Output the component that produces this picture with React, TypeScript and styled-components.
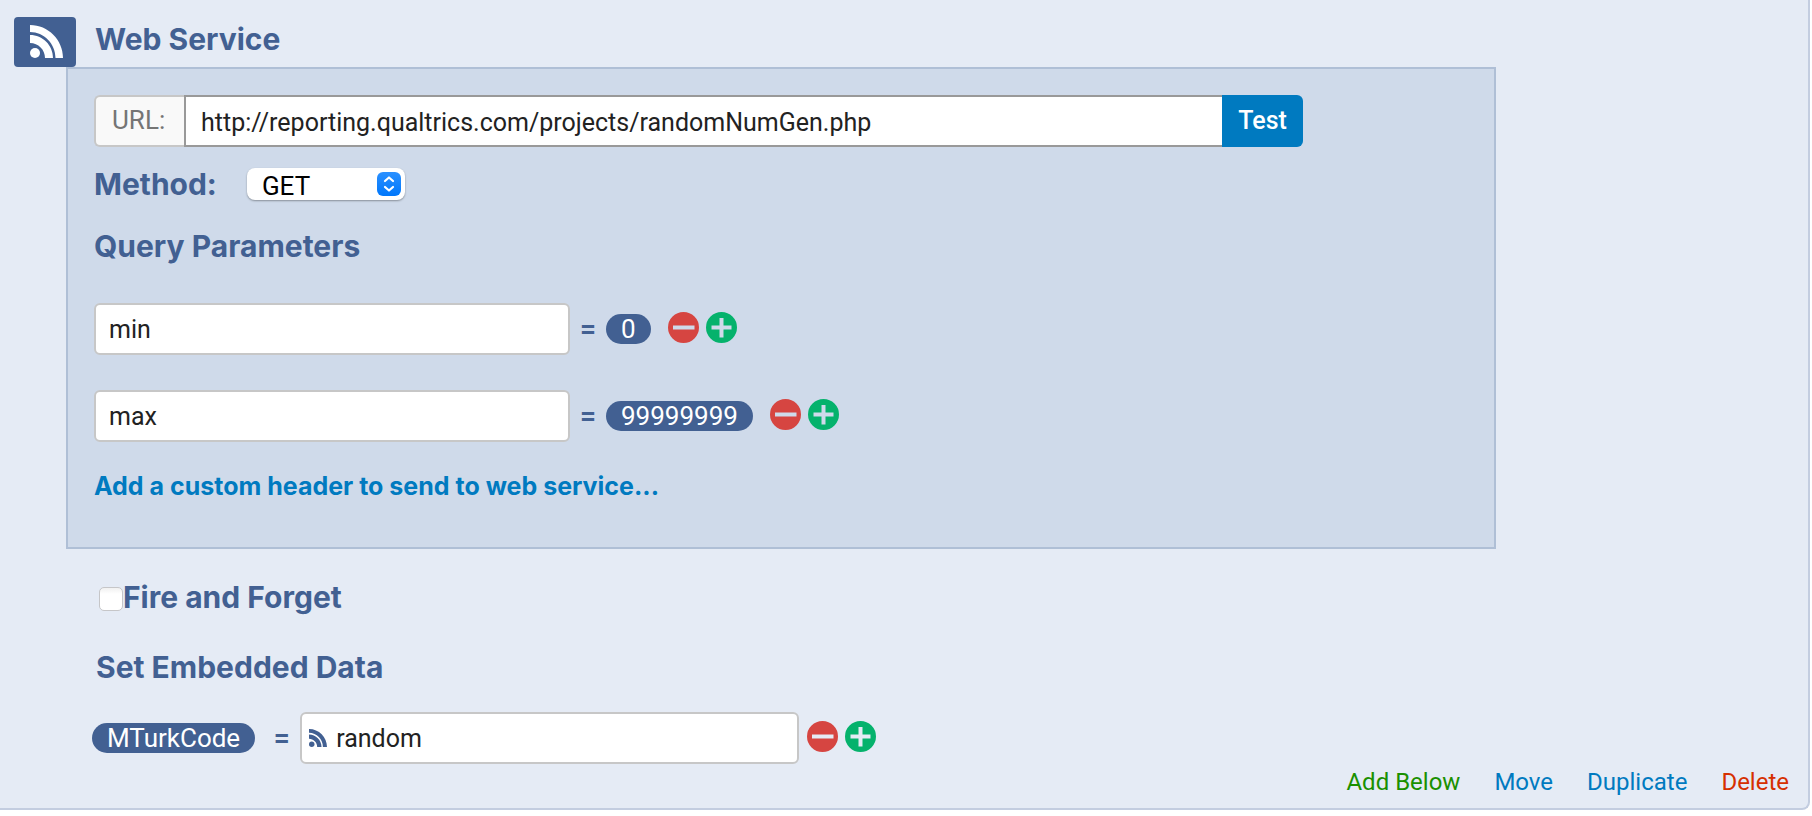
import React from 'react';
import styled, { createGlobalStyle } from 'styled-components';

const navy = '#426092';
const blue = '#007ac0';

const GlobalStyle = createGlobalStyle`
  *, *::before, *::after { box-sizing: border-box; }
  body {
    margin: 0;
    background: #fff;
    color: #222;
    font-family: Roboto, "Liberation Sans", sans-serif;
    font-size: 25px;
  }
  input, select, button { font: inherit; color: inherit; margin: 0; }
`;

const Card = styled.main`
  margin-right: 2px;
  background: #e5ebf5;
  border: solid #c3cde0;
  border-width: 0 2px 2px 0;
  border-bottom-right-radius: 8px;
  padding-top: 17px;
`;

const Header = styled.header`
  display: flex;
  align-items: center;
  gap: 19px;
  height: 50px;
  padding-left: 14px;
`;

const Badge = styled.div`
  display: flex;
  align-items: center;
  justify-content: center;
  width: 62px;
  height: 50px;
  padding-left: 2px;
  padding-bottom: 2px;
  border-radius: 4px;
  background: ${navy};
  color: #fff;
`;

const Title = styled.h2`
  margin: 0;
  font: bold 30px/40px Inter, sans-serif;
  color: ${navy};
`;

const HeaderTitle = styled(Title)`
  padding-bottom: 6px;
`;

const Panel = styled.section`
  margin: 0 312px 0 66px;
  padding: 26px 26px 45px;
  border: 2px solid #afbfd6;
  background: #cfdaea;
`;

const UrlGroup = styled.div`
  display: flex;
  height: 52px;
  max-width: 1209px;
`;

const UrlLabel = styled.label`
  flex: none;
  width: 90px;
  padding-left: 16px;
  border: 2px solid #c7c7c7;
  border-right: 0;
  border-radius: 6px 0 0 6px;
  background: #f9f9f9;
  color: #757575;
  font-size: 26px;
  line-height: 46px;
`;

const UrlInput = styled.input`
  flex: 1;
  min-width: 0;
  padding: 2px 15px 0;
  border: 2px solid #999;
  border-right: 0;
  border-radius: 0;
  background: #fff;
`;

const TestButton = styled.button`
  flex: none;
  width: 81px;
  padding: 0 0 1px;
  border: 0;
  border-radius: 0 6px 6px 0;
  background: ${blue};
  color: #fff;
  font-weight: 500;
`;

const MethodRow = styled.div`
  display: flex;
  align-items: center;
  gap: 30px;
  margin: 17px 0 22px;
`;

const MethodLabel = styled.label`
  font: bold 30px/40px Inter, sans-serif;
  color: ${navy};
`;

const SelectWrap = styled.div`
  position: relative;
  width: 158px;
  height: 32px;
`;

const Select = styled.select`
  appearance: none;
  width: 100%;
  height: 100%;
  padding: 4px 32px 0 15px;
  border: 0;
  border-radius: 8px;
  background: #fff;
  box-shadow: 0 1px 2px rgba(0, 0, 0, 0.35);
  color: #000;
  font-size: 26px;
  line-height: 28px;
`;

const Stepper = styled.svg`
  position: absolute;
  top: 4px;
  right: 4px;
  pointer-events: none;
`;

const ParamList = styled.div`
  display: flex;
  flex-direction: column;
  gap: 35px;
  margin: 37px 0 28px;
`;

const Row = styled.div`
  display: flex;
  align-items: center;
`;

const Field = styled.div<{ $width: number }>`
  display: flex;
  align-items: center;
  gap: 9px;
  flex: 0 1 ${(p) => p.$width}px;
  height: 52px;
  border: 2px solid #c7c7c7;
  border-radius: 6px;
  background: #fff;
  color: ${navy};
  overflow: hidden;
`;

const FieldInput = styled.input<{ $inset?: number }>`
  flex: 1;
  min-width: 0;
  height: 100%;
  padding: 0 0 0 ${(p) => p.$inset ?? 0}px;
  border: 0;
  background: transparent;
  color: #222;
  outline-offset: -2px;
`;

const FieldIcon = styled.span`
  display: flex;
  padding-left: 7px;
`;

const Equals = styled.span<{ $wide?: boolean }>`
  width: ${(p) => (p.$wide ? 45 : 36)}px;
  padding-left: ${(p) => (p.$wide ? 8 : 0)}px;
  text-align: center;
  font-size: 28px;
  font-weight: bold;
  line-height: 30px;
  color: ${navy};
`;

const Pill = styled.button`
  height: 30px;
  padding: 0 15px;
  border: 0;
  border-radius: 15px;
  background: ${navy};
  color: #fff;
  font-size: 26px;
  line-height: 30px;
`;

const Actions = styled.div<{ $gap: number }>`
  display: flex;
  gap: 7px;
  margin-left: ${(p) => p.$gap}px;
  padding-bottom: 3px;
`;

const RoundButton = styled.button<{ $color: string }>`
  display: flex;
  padding: 0;
  border: 0;
  border-radius: 50%;
  background: none;
  color: ${(p) => p.$color};
`;

const HeaderLink = styled.a`
  display: block;
  font: bold 25px/32px Inter, sans-serif;
  color: ${blue};
  text-decoration: none;
`;

const Below = styled.section`
  padding: 28px 0 0 92px;
`;

const CheckRow = styled.div`
  display: flex;
  align-items: center;
  padding-left: 7px;
  margin-bottom: 30px;
`;

const Checkbox = styled.input`
  appearance: none;
  width: 24px;
  height: 24px;
  margin: 4px 0 0;
  border: 1px solid #c6c6c8;
  border-radius: 5px;
  background: linear-gradient(#f1f1f1, #fff 6px);
`;

const EmbeddedTitle = styled(Title)`
  padding-left: 4px;
  margin-bottom: 25px;
`;

const Footer = styled.footer`
  display: flex;
  justify-content: flex-end;
  gap: 34px;
  padding: 2px 19px 10px;
`;

const FooterLink = styled.a<{ $color: string }>`
  color: ${(p) => p.$color};
  font-size: 24px;
  line-height: 32px;
  text-decoration: none;
`;

const FeedIcon = ({ size }: { size: number }) => (
  <svg width={size} height={size} viewBox="0 0 33 33" fill="currentColor" aria-hidden="true">
    <circle cx="5" cy="28" r="5" />
    <path d="M0 10C12.700 10 23 20.300 23 33H15C15 24.700 8.300 18 0 18Z" />
    <path d="M0 0C18.200 0 33 14.800 33 33H25.500C25.500 18.900 14.100 7 0 7Z" />
  </svg>
);

const AddRemove = ({ name, gap }: { name: string; gap: number }) => (
  <Actions $gap={gap}>
    <RoundButton type="button" $color="#d64541" aria-label={`Remove ${name}`}>
      <svg width="31" height="31" viewBox="0 0 31 31" fill="currentColor">
        <path fillRule="evenodd" d="M15.5 0a15.5 15.5 0 1 1 0 31a15.5 15.5 0 1 1 0-31ZM5 13.5v4h21.500v-4Z" />
      </svg>
    </RoundButton>
    <RoundButton type="button" $color="#05b26c" aria-label={`Add after ${name}`}>
      <svg width="31" height="31" viewBox="0 0 31 31" fill="currentColor">
        <path
          fillRule="evenodd"
          d="M15.5 0a15.500 15.500 0 1 1 0 31a15.500 15.500 0 1 1 0-31ZM13.500 6v7.500h-8v4h8v8h4v-8h8v-4h-8v-7.500Z"
        />
      </svg>
    </RoundButton>
  </Actions>
);

const params = [
  { name: 'min', value: '0' },
  { name: 'max', value: '99999999' },
];

export default function App() {
  return (
    <>
      <GlobalStyle />
      <Card>
        <Header>
          <Badge>
            <FeedIcon size={33} />
          </Badge>
          <HeaderTitle>Web Service</HeaderTitle>
        </Header>
        <Panel>
          <UrlGroup>
            <UrlLabel htmlFor="url">URL:</UrlLabel>
            <UrlInput id="url" defaultValue="http://reporting.qualtrics.com/projects/randomNumGen.php" />
            <TestButton type="button">Test</TestButton>
          </UrlGroup>
          <MethodRow>
            <MethodLabel htmlFor="method">Method:</MethodLabel>
            <SelectWrap>
              <Select id="method" defaultValue="GET">
                <option>GET</option>
                <option>POST</option>
              </Select>
              <Stepper width="24" height="24" viewBox="0 0 24 24" aria-hidden="true">
                <defs>
                  <linearGradient id="stepper" x1="0" y1="0" x2="0" y2="1">
                    <stop offset="0" stopColor="#2a90ff" />
                    <stop offset="1" stopColor="#0077fb" />
                  </linearGradient>
                </defs>
                <rect width="24" height="24" rx="6" fill="url(#stepper)" />
                <path
                  d="M8 9L12 5.500L16 9M8 15L12 18.500L16 15"
                  fill="none"
                  stroke="#fff"
                  strokeWidth="2.200"
                  strokeLinecap="round"
                  strokeLinejoin="round"
                />
              </Stepper>
            </SelectWrap>
          </MethodRow>
          <Title as="h3">Query Parameters</Title>
          <ParamList>
            {params.map((p) => (
              <Row key={p.name}>
                <Field $width={476}>
                  <FieldInput $inset={13} aria-label="Parameter name" defaultValue={p.name} />
                </Field>
                <Equals>=</Equals>
                <Pill type="button">{p.value}</Pill>
                <AddRemove name={p.name} gap={17} />
              </Row>
            ))}
          </ParamList>
          <HeaderLink href="#header">Add a custom header to send to web service...</HeaderLink>
        </Panel>
        <Below>
          <CheckRow>
            <Checkbox id="fire" type="checkbox" />
            <MethodLabel htmlFor="fire">Fire and Forget</MethodLabel>
          </CheckRow>
          <EmbeddedTitle as="h3">Set Embedded Data</EmbeddedTitle>
          <Row>
            <Pill type="button">MTurkCode</Pill>
            <Equals $wide>=</Equals>
            <Field $width={499}>
              <FieldIcon>
                <FeedIcon size={18} />
              </FieldIcon>
              <FieldInput aria-label="Embedded data value" defaultValue="random" />
            </Field>
            <AddRemove name="MTurkCode" gap={8} />
          </Row>
        </Below>
        <Footer>
          <FooterLink href="#add" $color="#1a9000">Add Below</FooterLink>
          <FooterLink href="#move" $color={blue}>Move</FooterLink>
          <FooterLink href="#duplicate" $color={blue}>Duplicate</FooterLink>
          <FooterLink href="#delete" $color="#d62f00">Delete</FooterLink>
        </Footer>
      </Card>
    </>
  );
}
